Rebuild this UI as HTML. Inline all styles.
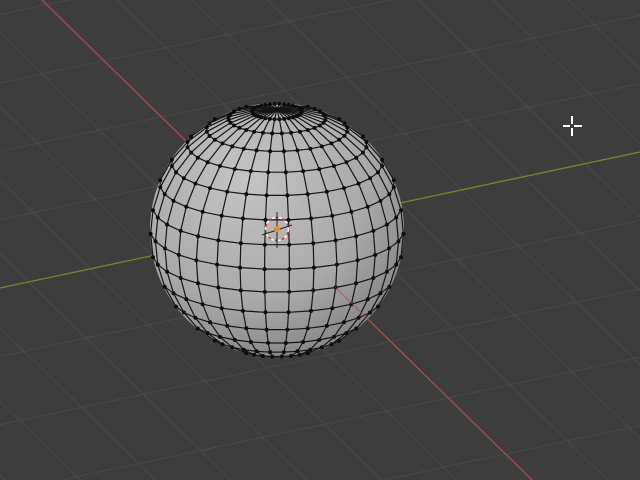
<!DOCTYPE html>
<html><head><meta charset="utf-8"><style>
html,body{margin:0;padding:0;background:#3d3d3d;overflow:hidden;width:640px;height:480px}
svg{display:block;position:absolute;left:0;top:0}
</style></head><body>
<svg id="s" width="640" height="480" viewBox="0 0 640 480" xmlns="http://www.w3.org/2000/svg">
<defs>
<radialGradient id="g" cx="0.38" cy="0.3" r="0.8">
<stop offset="0" stop-color="#c4c4c4"/>
<stop offset="0.6" stop-color="#a9a9a9"/>
<stop offset="1" stop-color="#7e7e7e"/>
</radialGradient>
</defs>
<rect width="640" height="480" fill="#3d3d3d"/>
<g id="grid" stroke="#4a4a4a" stroke-width="1" fill="none"></g>
<line x1="42" y1="0" x2="532" y2="480" stroke="#a84a52" stroke-width="1.3"/>
<line x1="0" y1="288" x2="640" y2="152" stroke="#6f8a2a" stroke-width="1.3"/>
<circle cx="277" cy="230" r="127" fill="url(#g)"/>
<g id="wire" stroke="#151515" stroke-width="1.2" fill="none"></g>
<g id="dots" fill="#0d0d0d"></g>
<line x1="335" y1="287" x2="420" y2="370" stroke="#a84a52" stroke-width="1.3" opacity="0.6"/>
<circle cx="277" cy="229" r="11.5" fill="none" stroke="#fff" stroke-width="1.5" stroke-dasharray="4 3"/>
<circle cx="277" cy="229" r="11.5" fill="none" stroke="#e03030" stroke-width="1.5" stroke-dasharray="3 4" stroke-dashoffset="4"/>
<line x1="277" y1="212" x2="277" y2="248" stroke="#222" stroke-width="1"/>
<line x1="262" y1="235" x2="292" y2="225" stroke="#222" stroke-width="1"/>
<circle cx="277" cy="229" r="3" fill="#f08a1c"/>
<g stroke="#fff" stroke-width="2">
<line x1="563" y1="126" x2="570" y2="126"/><line x1="574" y1="126" x2="582" y2="126"/>
<line x1="572" y1="116" x2="572" y2="124"/><line x1="572" y1="128" x2="572" y2="136"/>
</g>
</svg>
<script>
var NS="http://www.w3.org/2000/svg";
function el(p,t,a){var e=document.createElementNS(NS,t);for(var k in a)e.setAttribute(k,a[k]);p.appendChild(e);return e;}
var g=document.getElementById('grid');
for(var i=-12;i<=12;i++){ if(i==0)continue;
  var dx=i*62, dy=-i*13;
  el(g,'line',{x1:42+dx-490,y1:0+dy-480,x2:532+dx+490,y2:480+dy+480});
  var ox=i*30, oy=i*62;
  el(g,'line',{x1:-640+ox,y1:288+oy+136,x2:1280+ox,y2:152+oy-136});
}
var cx=277,cy=230,R=127,e=18*Math.PI/180,ce=Math.cos(e),se=Math.sin(e);
function P(lat,lon){var x=Math.cos(lat)*Math.sin(lon),y=Math.sin(lat),z=Math.cos(lat)*Math.cos(lon);
 var y2=y*ce-z*se, d=y*se+z*ce;
 return [cx+R*x, cy-R*y2, d];}
var w=document.getElementById('wire'),dots=document.getElementById('dots');
var NR=16,NS2=32;
function seg(a,b){ if(a[2]>-0.02&&b[2]>-0.02) el(w,'line',{x1:a[0].toFixed(1),y1:a[1].toFixed(1),x2:b[0].toFixed(1),y2:b[1].toFixed(1)}); }
var pts=[];
for(var r=1;r<NR;r++){var lat=Math.PI/2-r*Math.PI/NR;pts[r]=[];
 for(var s=0;s<NS2;s++){pts[r][s]=P(lat,s*2*Math.PI/NS2+Math.PI/NS2);}}
var np=P(Math.PI/2,0),sp=P(-Math.PI/2,0);
for(var r=1;r<NR;r++)for(var s=0;s<NS2;s++){
 seg(pts[r][s],pts[r][(s+1)%NS2]);
 if(r<NR-1)seg(pts[r][s],pts[r+1][s]);
 if(r==1)seg(np,pts[r][s]);
 if(r==NR-1)seg(sp,pts[r][s]);
}
for(var r=1;r<NR;r++)for(var s=0;s<NS2;s++){var p=pts[r][s];
 if(p[2]>-0.02) el(dots,'circle',{cx:p[0].toFixed(1),cy:p[1].toFixed(1),r:2});}
el(dots,'circle',{cx:np[0],cy:np[1],r:2});
</script>
</body></html>
